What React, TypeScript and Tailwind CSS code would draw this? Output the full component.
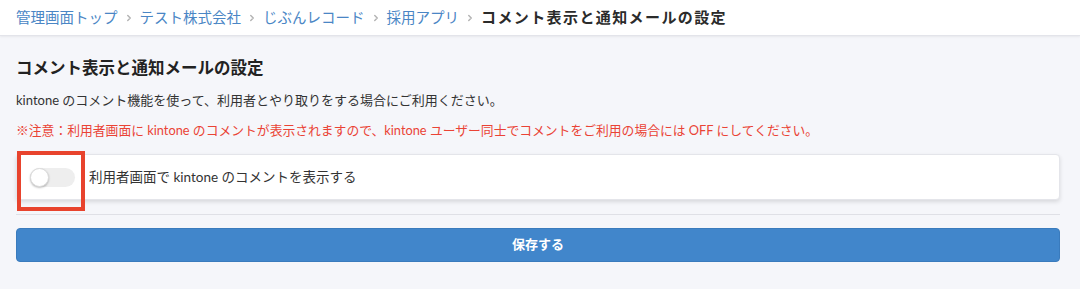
import { ChevronRight } from 'lucide-react';

const crumbs = ['管理画面トップ', 'テスト株式会社', 'じぶんレコード', '採用アプリ'];

const Toggle = () => (
  <div className="relative w-[45px] h-[19px] rounded-full bg-[#eeeeee] shrink-0">
    <div className="absolute left-0 top-0 w-[19px] h-[19px] rounded-full bg-white border border-[#dcdcdc] shadow-[0_1px_2px_rgba(0,0,0,0.25)]" />
  </div>
);

const App = () => {
  return (
    <div className="w-[1080px] h-[289px] bg-[#f5f6fa] font-['Lato','Noto_Sans_CJK_JP',sans-serif] text-[#333] overflow-hidden">
      <nav className="h-[36px] bg-white border-b border-[#e3e4ea] shadow-[0_1px_2px_rgba(0,0,0,0.06)] flex items-center px-4 gap-[6px] text-[14.5px]">
        {crumbs.map((c) => (
          <div key={c} className="flex items-center gap-[6px]">
            <a className="text-[#4a86c5] cursor-pointer">{c}</a>
            <ChevronRight size={10} strokeWidth={3.5} className="text-[#b4b4b4]" />
          </div>
        ))}
        <span className="font-bold text-[#2b2b2b] text-[15px] tracking-[1.4px]">コメント表示と通知メールの設定</span>
      </nav>

      <main className="pl-4 pr-[20px] pt-[20px]">
        <h2 className="h-[24px] flex items-center text-[16.5px] font-bold text-[#222]">
          コメント表示と通知メールの設定
        </h2>
        <p className="mt-[11px] h-[20px] flex items-center text-[13px] text-[#333]">
          kintone のコメント機能を使って、利用者とやり取りをする場合にご利用ください。
        </p>
        <p className="mt-[10px] h-[20px] flex items-center text-[12.8px] text-[#ea4335]">
          ※注意：利用者画面に kintone のコメントが表示されますので、kintone ユーザー同士でコメントをご利用の場合には OFF にしてください。
        </p>

        <div className="relative mt-[13px] h-[46px] bg-white rounded-[4px] border border-[#e4e5ea] shadow-[0_2px_4px_rgba(0,0,0,0.12)] flex items-center pl-[13px] gap-[14px]">
          <Toggle />
          <span className="text-[13.5px] text-[#333]">利用者画面で kintone のコメントを表示する</span>
          <div className="absolute left-0 top-[-4px] w-[68px] h-[60px] border-[4px] border-[#e8432d] pointer-events-none" />
        </div>

        <hr className="mt-[14px] border-0 h-px bg-[#dfe0e6]" />

        <button className="mt-[13px] w-full h-[34px] rounded-[4px] bg-[#4186cb] border border-[#3a7bbd] text-white text-[13px] font-bold">
          保存する
        </button>
      </main>
    </div>
  );
};

export default App;
